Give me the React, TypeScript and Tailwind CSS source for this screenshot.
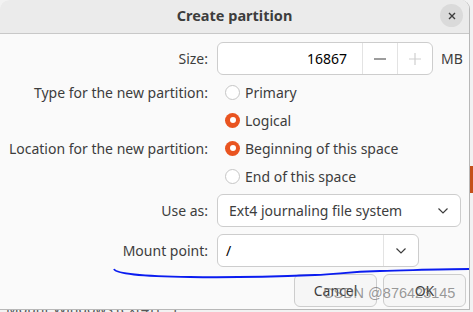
import React from "react";

const font = { fontFamily: '"Noto Sans", "Open Sans", sans-serif' };

function Radio({ checked }: { checked?: boolean }) {
  return checked ? (
    <span className="w-[15px] h-[15px] rounded-full bg-[#e95420] flex items-center justify-center shrink-0">
      <span className="w-[6px] h-[6px] rounded-full bg-white" />
    </span>
  ) : (
    <span className="w-[15px] h-[15px] rounded-full bg-white border border-[#c6c6c6] shrink-0" />
  );
}

function Chevron() {
  return (
    <svg width="12" height="8" viewBox="0 0 12 8" fill="none">
      <path d="M1.5 1.5 L6 6 L10.5 1.5" stroke="#3d3d3d" strokeWidth="1.2" />
    </svg>
  );
}

function RadioRow({ label, text, checked }: { label?: string; text: string; checked?: boolean }) {
  return (
    <div className="flex h-[28px] items-center">
      <div className="w-[210px] text-right pr-[2px]">{label ?? ""}</div>
      <div className="flex items-center gap-[5px] pl-[15px]">
        <Radio checked={checked} />
        <span>{text}</span>
      </div>
    </div>
  );
}

export default function App() {
  return (
    <div className="relative w-[473px] h-[312px] overflow-hidden bg-[#f2f2f2] text-[#3d3d3d] text-[14px]" style={font}>
      {/* background window strip at right */}
      <div className="absolute right-0 top-[166px] w-[3px] h-[27px] bg-[#c4501a]" />
      {/* bottom peek of window behind */}
      <div className="absolute left-0 top-[310px] w-[473px] h-[2px] overflow-hidden">
        <div className="absolute left-[6px] -top-[12px] text-[14px] text-[#555]">Mount Windows (ext4) (...)</div>
      </div>
      <div className="absolute left-0 top-0 w-[470px] h-[310px] bg-[#fafafa] rounded-t-[9px] border-r border-b border-[#b8b8b8] overflow-hidden">
        {/* title bar */}
        <div className="relative h-[34px] bg-[#ebebeb] border-b border-[#c8c8c8] flex items-center justify-center pb-[1px]">
          <span className="font-bold text-[14.5px] text-[#3d3d3d]">Create partition</span>
          <div className="absolute right-[6px] top-[4px] w-[23px] h-[23px] rounded-full bg-[#dadada] flex items-center justify-center">
            <svg width="10" height="10" viewBox="0 0 10 10">
              <path d="M2 2 L8 8 M8 2 L2 8" stroke="#3d3d3d" strokeWidth="1.4" />
            </svg>
          </div>
        </div>

        <div className="flex flex-col pt-[8px]">
          {/* Size */}
          <div className="flex h-[33px] items-center">
            <div className="w-[210px] text-right pr-[2px]">Size:</div>
            <div className="ml-[7px] w-[216px] h-[33px] bg-white border border-[#cdcdcd] rounded-[6px] flex items-stretch">
              <div className="flex-1 flex items-center justify-end pr-[15px] text-black">16867</div>
              <div className="w-[35px] border-l border-[#e3e3e3] flex items-center justify-center">
                <svg width="12" height="2" viewBox="0 0 12 2"><path d="M0 1 H12" stroke="#3d3d3d" strokeWidth="1.2" /></svg>
              </div>
              <div className="w-[35px] border-l border-[#e3e3e3] flex items-center justify-center">
                <svg width="12" height="12" viewBox="0 0 12 12"><path d="M0 6 H12 M6 0 V12" stroke="#cfcfcf" strokeWidth="1.2" /></svg>
              </div>
            </div>
            <div className="ml-[8px]">MB</div>
          </div>

          <div className="mt-[3px] mb-[1px]">
            <RadioRow label="Type for the new partition:" text="Primary" />
            <RadioRow text="Logical" checked />
            <RadioRow label="Location for the new partition:" text="Beginning of this space" checked />
            <RadioRow text="End of this space" />
          </div>

          {/* Use as */}
          <div className="flex h-[33px] items-center mt-[3px]">
            <div className="w-[210px] text-right pr-[2px]">Use as:</div>
            <div className="ml-[7px] w-[244px] h-[33px] bg-white border border-[#cdcdcd] rounded-[6px] flex items-center justify-between pl-[11px] pr-[11px]">
              <span>Ext4 journaling file system</span>
              <Chevron />
            </div>
          </div>

          {/* Mount point */}
          <div className="flex h-[33px] items-center mt-[7px]">
            <div className="w-[210px] text-right pr-[2px]">Mount point:</div>
            <div className="ml-[7px] w-[202px] h-[33px] bg-white border border-[#cdcdcd] rounded-[6px] flex items-stretch">
              <div className="flex-1 flex items-center pl-[8px] text-black">/</div>
              <div className="w-[35px] border-l border-[#e3e3e3] flex items-center justify-center">
                <Chevron />
              </div>
            </div>
          </div>

          {/* Buttons */}
          <div className="flex justify-end gap-[6px] pr-[3px] mt-[7px]">
            <button className="w-[83px] h-[33px] bg-[#f6f6f6] border border-[#cdcdcd] rounded-[6px] text-[#3d3d3d]">Cancel</button>
            <button className="w-[83px] h-[33px] bg-[#f6f6f6] border border-[#cdcdcd] rounded-[6px] text-[#3d3d3d]">OK</button>
          </div>
        </div>
      </div>

      {/* hand-drawn blue underline */}
      <svg className="absolute left-0 top-0 pointer-events-none" width="473" height="312" viewBox="0 0 473 312">
        <path d="M114 269 C116 274 140 276 190 277 C240 278 290 276 315 275 C340 274 345 272 380 271 C420 270 440 269 469 269" stroke="#0a1cf0" strokeWidth="1.8" fill="none" />
      </svg>

      {/* watermark */}
      <div className="absolute left-[323px] top-[283px] text-[14.5px] text-[rgba(110,110,110,0.7)]" style={{ fontFamily: '"Liberation Sans", sans-serif' }}>
        CSDN @876423145
      </div>
    </div>
  );
}
